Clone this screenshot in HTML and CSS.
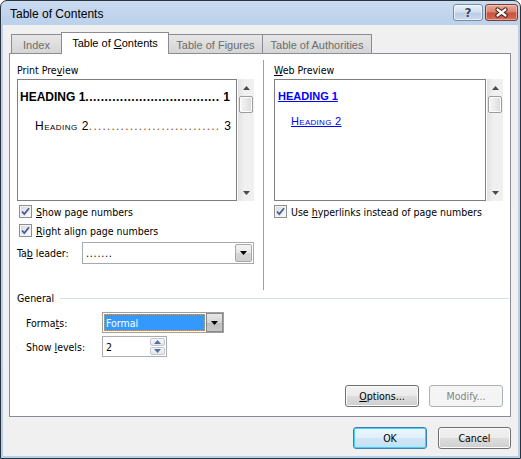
FILE: index.html
```html
<!DOCTYPE html>
<html lang="en">
<head>
<meta charset="utf-8">
<title>Table of Contents</title>
<link rel="stylesheet" href="styles.css">
</head>
<body>
<div class="window">
  <div class="titlebar">
    <div class="title">Table of Contents</div>
    <div class="caption-buttons">
      <div class="cap-btn help"><span class="help-glyph">?</span></div>
      <div class="cap-btn close">
        <svg width="15" height="11" viewBox="0 0 15 11"><path d="M3.5 2.5 L11.5 8.5 M11.5 2.5 L3.5 8.5" stroke="#4a1a12" stroke-width="4.2" stroke-linecap="round" fill="none"/><path d="M3.5 2.5 L11.5 8.5 M11.5 2.5 L3.5 8.5" stroke="#ffffff" stroke-width="2.2" stroke-linecap="round" fill="none"/></svg>
      </div>
    </div>
  </div>
  <div class="client">
    <div class="tabs">
      <div class="tab w-index"><span>Index</span></div>
      <div class="tab active w-toc"><span>Table of <u>C</u>ontents</span></div>
      <div class="tab w-fig"><span>Table of Figures</span></div>
      <div class="tab w-auth"><span>Table of Authorities</span></div>
    </div>
    <div class="panel">
      <div class="top">
        <div class="col col-left">
          <div class="label">Print Pre<u>v</u>iew</div>
          <div class="preview-row">
            <div class="preview">
              <div class="toc-line p-h1"><span>HEADING 1</span><span class="dots">...................................</span><span class="num">&nbsp;1</span></div>
              <div class="toc-line p-h2"><span>Heading 2</span><span class="dots brown">.............................</span><span class="num">&nbsp;3</span></div>
            </div>
            <div class="vscroll">
              <div class="sb-arrow"><svg width="7" height="4" viewBox="0 0 7 4"><path d="M0 4 L3.5 0 L7 4 Z" fill="#4a4a4a"/></svg></div>
              <div class="thumb"></div>
              <div class="sb-space"></div>
              <div class="sb-arrow"><svg width="7" height="4" viewBox="0 0 7 4"><path d="M0 0 L7 0 L3.5 4 Z" fill="#4a4a4a"/></svg></div>
            </div>
          </div>
          <div class="check first">
            <span class="cb"><svg width="11" height="11" viewBox="0 0 11 11"><path d="M2 5.5 L4.3 8 L9 2.2" stroke="#4b5c92" stroke-width="1.8" fill="none"/></svg></span>
            <span><u>S</u>how page numbers</span>
          </div>
          <div class="check">
            <span class="cb"><svg width="11" height="11" viewBox="0 0 11 11"><path d="M2 5.5 L4.3 8 L9 2.2" stroke="#4b5c92" stroke-width="1.8" fill="none"/></svg></span>
            <span><u>R</u>ight align page numbers</span>
          </div>
          <div class="tabrow">
            <span class="lbl">Ta<u>b</u> leader:</span>
            <div class="combo">
              <span class="combo-text leader">.......</span>
              <span class="drop"><svg width="7" height="4" viewBox="0 0 7 4"><path d="M0 0 L7 0 L3.5 4 Z" fill="#000"/></svg></span>
            </div>
          </div>
        </div>
        <div class="divider"></div>
        <div class="col col-right">
          <div class="label"><u>W</u>eb Preview</div>
          <div class="preview-row">
            <div class="preview">
              <div class="w-h1"><span class="link">HEADING 1</span></div>
              <div class="w-h2"><span class="link">Heading 2</span></div>
            </div>
            <div class="vscroll">
              <div class="sb-arrow"><svg width="7" height="4" viewBox="0 0 7 4"><path d="M0 4 L3.5 0 L7 4 Z" fill="#4a4a4a"/></svg></div>
              <div class="thumb"></div>
              <div class="sb-space"></div>
              <div class="sb-arrow"><svg width="7" height="4" viewBox="0 0 7 4"><path d="M0 0 L7 0 L3.5 4 Z" fill="#4a4a4a"/></svg></div>
            </div>
          </div>
          <div class="check first">
            <span class="cb"><svg width="11" height="11" viewBox="0 0 11 11"><path d="M2 5.5 L4.3 8 L9 2.2" stroke="#4b5c92" stroke-width="1.8" fill="none"/></svg></span>
            <span>Use <u>h</u>yperlinks instead of page numbers</span>
          </div>
        </div>
      </div>
      <div class="ghead"><span>General</span><span class="gline"></span></div>
      <div class="frow first">
        <span class="lbl">Forma<u>t</u>s:</span>
        <div class="fcombo">
          <span class="sel">Formal</span>
          <span class="fdrop"><svg width="7" height="4" viewBox="0 0 7 4"><path d="M0 0 L7 0 L3.5 4 Z" fill="#000"/></svg></span>
        </div>
      </div>
      <div class="frow">
        <span class="lbl">Show <u>l</u>evels:</span>
        <div class="spin">
          <span class="spin-text">2</span>
          <span class="spin-btns">
            <span class="sbtn"><svg width="7" height="4" viewBox="0 0 7 4"><path d="M0 4 L3.5 0 L7 4 Z" fill="#5570a0"/></svg></span>
            <span class="sbtn"><svg width="7" height="4" viewBox="0 0 7 4"><path d="M0 0 L7 0 L3.5 4 Z" fill="#5570a0"/></svg></span>
          </span>
        </div>
      </div>
      <div class="pbtns">
        <div class="btn"><span><u>O</u>ptions...</span></div>
        <div class="btn disabled"><span>Modify...</span></div>
      </div>
    </div>
    <div class="dbtns">
      <div class="btn default w74"><span>OK</span></div>
      <div class="btn w73"><span>Cancel</span></div>
    </div>
  </div>
</div>
</body>
</html>
```

FILE: styles.css
```css
html, body {
  margin: 0;
  padding: 0;
  background: #ffffff;
}

.window {
  width: 521px;
  height: 459px;
  box-sizing: border-box;
  border: 1px solid #2a323c;
  border-radius: 7px 7px 0 0;
  background: linear-gradient(180deg, #c9dbf0 0px, #bbd0ea 24px, #b6cfea 100%);
  padding: 0 2px 2px 2px;
  display: flex;
  flex-direction: column;
  font-family: "DejaVu Sans Condensed", "DejaVu Sans", sans-serif;
  font-size: 10.5px;
  color: #000;
  overflow: hidden;
}

/* ---------- title bar ---------- */
.titlebar {
  height: 24px;
  display: flex;
  justify-content: space-between;
  align-items: flex-start;
  flex-shrink: 0;
}

.title {
  font-family: "Liberation Sans", Arial, sans-serif;
  font-size: 12px;
  line-height: 14px;
  margin: 6px 0 0 7px;
  color: #000;
}

.caption-buttons {
  display: flex;
  gap: 2px;
  margin-top: 3px;
}

.cap-btn {
  box-sizing: border-box;
  height: 17px;
  border-radius: 3px;
  display: flex;
  align-items: center;
  justify-content: center;
}

.help {
  width: 30px;
  border: 1px solid #7b8ca5;
  background: linear-gradient(180deg, #e9f0f8 0%, #d3e0f0 45%, #bccde4 55%, #c9d9ee 100%);
  box-shadow: inset 0 0 0 1px rgba(255,255,255,0.6);
}

.help-glyph {
  font-family: "DejaVu Sans", sans-serif;
  font-weight: bold;
  font-size: 12px;
  line-height: 12px;
  color: #34445e;
  text-shadow: 0 0 1px #fff, 0 0 1px #fff;
}

.close {
  width: 33px;
  border: 1px solid #7a3b31;
  background: linear-gradient(180deg, #e9ab9d 0%, #d98370 45%, #c8513b 55%, #d2705c 100%);
  box-shadow: inset 0 0 0 1px rgba(255,220,210,0.5);
}

/* ---------- client ---------- */
.client {
  flex: 1;
  background: #f0f0f0;
  padding: 7px 7px 0 6px;
  display: flex;
  flex-direction: column;
}

.tabs {
  display: flex;
  align-items: flex-end;
  height: 21px;
  margin-left: 2px;
}

.tab {
  box-sizing: border-box;
  height: 19px;
  border: 1px solid #898c95;
  border-bottom: none;
  margin-right: -1px;
  background: linear-gradient(180deg, #e6e6e6, #d5d5d5);
  color: #6d6d6d;
  font-family: "Liberation Sans", Arial, sans-serif;
  font-size: 11px;
  display: flex;
  align-items: center;
  justify-content: center;
  padding-top: 1px;
  white-space: nowrap;
}

.tab.active {
  height: 22px;
  background: #ffffff;
  color: #000;
  margin-bottom: -1px;
  position: relative;
  z-index: 1;
  padding-top: 0;
  padding-bottom: 2px;
}

.w-index { width: 51px; }
.w-toc { width: 108px; }
.w-fig { width: 95px; }
.w-auth { width: 110px; }

.panel {
  box-sizing: border-box;
  width: 502px;
  height: 364px;
  border: 1px solid #898c95;
  background: #ffffff;
  padding: 0 7px 9px 7px;
  display: flex;
  flex-direction: column;
}

.top {
  display: flex;
  height: 236px;
  flex-shrink: 0;
}

.col {
  display: flex;
  flex-direction: column;
}

.col-left { width: 237px; }
.col-right { width: 229px; }

.divider {
  width: 1px;
  background: #a0a0a0;
  margin: 6px 10px 0 9px;
}

.label {
  margin-top: 9px;
  height: 14px;
  line-height: 14px;
}

.preview-row {
  display: flex;
  gap: 1px;
  margin-top: 2px;
  height: 122px;
}

.preview {
  flex: 1;
  box-sizing: border-box;
  border: 1px solid #7f7f7f;
  background: #fff;
  overflow: hidden;
}

.toc-line {
  display: flex;
  white-space: nowrap;
  font-family: "Liberation Sans", Arial, sans-serif;
  padding-right: 6px;
  line-height: 16px;
}

.p-h1 {
  font-weight: bold;
  font-size: 12px;
  margin-top: 9px;
  padding-left: 2px;
}

.p-h2 {
  font-size: 12px;
  font-variant: small-caps;
  letter-spacing: 0.5px;
  margin-top: 13px;
  padding-left: 17px;
}

.dots { flex-shrink: 0; }

.p-h1 .dots { letter-spacing: 0.5px; }
.p-h2 .dots { letter-spacing: 1.2px; }

.brown { color: #8a4e1e; }

.num {
  flex-shrink: 0;
  margin-left: auto;
}

.w-h1 {
  font-family: "Liberation Sans", Arial, sans-serif;
  font-weight: bold;
  font-size: 11px;
  line-height: 14px;
  margin-top: 9px;
  padding-left: 3px;
}

.w-h2 {
  font-family: "Liberation Sans", Arial, sans-serif;
  font-size: 11px;
  font-variant: small-caps;
  letter-spacing: 0.3px;
  line-height: 14px;
  margin-top: 11px;
  padding-left: 16px;
}

.link {
  color: #0000ff;
  text-decoration: underline;
}

.vscroll {
  width: 16px;
  background: linear-gradient(90deg, #e2e2e2 0%, #f0f0f0 40%, #f0f0f0 100%);
  display: flex;
  flex-direction: column;
  align-items: center;
}

.sb-arrow {
  height: 17px;
  width: 16px;
  display: flex;
  align-items: center;
  justify-content: center;
}

.thumb {
  box-sizing: border-box;
  width: 14px;
  height: 17px;
  border: 1px solid #9c9c9c;
  border-radius: 2px;
  background: linear-gradient(90deg, #f6f6f6 0%, #eaeaea 50%, #d9d9d9 100%);
  box-shadow: inset 0 0 0 1px #fdfdfd;
}

.sb-space { flex: 1; }

/* ---------- checkboxes ---------- */
.check {
  display: flex;
  align-items: center;
  gap: 4px;
  height: 19px;
}

.check.first { margin-top: 1px; }

.col-left .check { padding-left: 2px; }

.cb {
  box-sizing: border-box;
  width: 13px;
  height: 13px;
  border: 1px solid #8e8f8f;
  background: linear-gradient(135deg, #d4d6dd 0%, #eef0f4 60%, #fbfbfb 100%);
  box-shadow: inset 0 0 0 1px #f4f4f4;
  display: flex;
  align-items: center;
  justify-content: center;
  flex-shrink: 0;
}

/* ---------- combo / tab leader ---------- */
.tabrow {
  display: flex;
  align-items: center;
  margin-top: 2px;
  height: 22px;
}

.tabrow .lbl { width: 65px; }

.combo {
  box-sizing: border-box;
  width: 172px;
  height: 22px;
  border: 1px solid #a5a9b0;
  background: #fff;
  display: flex;
  align-items: stretch;
}

.combo-text {
  flex: 1;
  padding-left: 3px;
  display: flex;
  align-items: center;
}

.leader { letter-spacing: 0.8px; }

.drop {
  box-sizing: border-box;
  width: 17px;
  margin: 1px;
  border: 1px solid #a8a8a8;
  border-radius: 2px;
  background: linear-gradient(180deg, #f4f4f4 0%, #e6e6e6 50%, #d6d6d6 51%, #cfcfcf 100%);
  display: flex;
  align-items: center;
  justify-content: center;
}

/* ---------- general ---------- */
.ghead {
  display: flex;
  align-items: center;
  height: 14px;
  line-height: 14px;
  margin-top: 1px;
  margin-right: -6px;
}

.gline {
  flex: 1;
  height: 1px;
  background: #d5dfe5;
  margin-left: 6px;
}

.frow {
  display: flex;
  align-items: center;
  padding-left: 9px;
  height: 21px;
  margin-top: 3px;
}

.frow.first { margin-top: 7px; }

.frow .lbl { width: 76px; }

.fcombo {
  box-sizing: border-box;
  width: 122px;
  height: 21px;
  border: 1px solid #a0a0a0;
  background: #fff;
  display: flex;
  align-items: stretch;
  padding: 1px 0 1px 1px;
}

.sel {
  flex: 1;
  box-sizing: border-box;
  background: #3399ff;
  color: #fff;
  border: 1px dotted #e89a4a;
  padding-left: 1px;
  display: flex;
  align-items: center;
  margin-right: 1px;
}

.fdrop {
  box-sizing: border-box;
  width: 17px;
  margin-top: -1px;
  margin-bottom: -1px;
  border: 1px solid #8a8a8a;
  background: linear-gradient(180deg, #e8e8e8 0%, #d4d4d4 50%, #bcbcbc 51%, #c8c8c8 100%);
  display: flex;
  align-items: center;
  justify-content: center;
}

.spin {
  box-sizing: border-box;
  width: 65px;
  height: 21px;
  border: 1px solid #abadb3;
  background: #fff;
  display: flex;
  align-items: stretch;
}

.spin-text {
  flex: 1;
  padding-left: 3px;
  display: flex;
  align-items: center;
}

.spin-btns {
  width: 15px;
  display: flex;
  flex-direction: column;
  gap: 1px;
  padding: 1px 1px 1px 0;
}

.sbtn {
  flex: 1;
  box-sizing: border-box;
  border: 1px solid #c4c8ce;
  border-radius: 2px;
  background: linear-gradient(180deg, #f7f7f7, #e4e6ea);
  display: flex;
  align-items: center;
  justify-content: center;
}

/* ---------- buttons ---------- */
.pbtns {
  margin-top: auto;
  display: flex;
  justify-content: flex-end;
  gap: 10px;
}

.btn {
  box-sizing: border-box;
  width: 74px;
  height: 22px;
  border: 1px solid #707070;
  border-radius: 3px;
  background: linear-gradient(180deg, #f2f2f2 0%, #ebebeb 48%, #dddddd 52%, #cfcfcf 100%);
  box-shadow: inset 0 0 0 1px #fbfbfb;
  display: flex;
  align-items: center;
  justify-content: center;
  color: #000;
}

.btn.disabled {
  border-color: #adb2b5;
  background: #f4f4f4;
  box-shadow: none;
  color: #838383;
}

.btn.default {
  border-color: #3c7fb1;
  box-shadow: inset 0 0 0 1px #48d0f5;
  background: linear-gradient(180deg, #eaf6fd 0%, #e0f0fb 48%, #cfe6f6 52%, #c4e0f4 100%);
}

.dbtns {
  display: flex;
  justify-content: flex-end;
  gap: 11px;
  margin-top: 10px;
}

.w74 { width: 74px; }
.w73 { width: 73px; }
```
